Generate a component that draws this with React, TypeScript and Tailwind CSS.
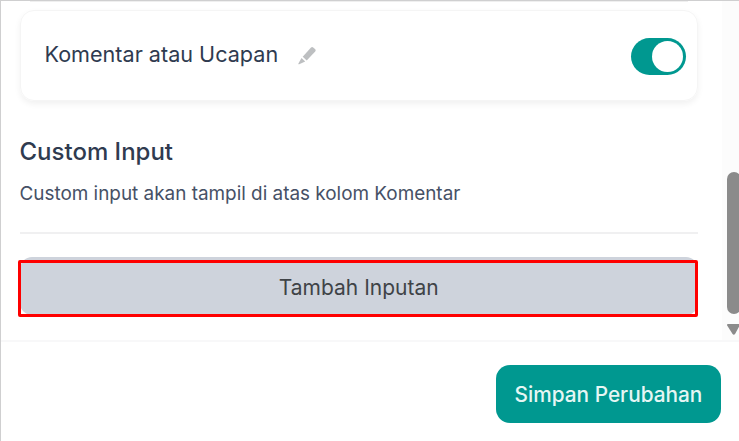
import { useState } from 'react';

const PencilIcon = () => (
  <svg width="18" height="19" viewBox="0 0 18 19" fill="#bdbfc1">
    <path d="M4.7 10.7 13 1.5Q14.1.4 15.2 1.4L17.2 3.3Q18.2 4.3 17.2 5.4L8.7 14.4Z" />
    <path d="M3.5 12 7.2 15.5 1.2 18.2Q.1 18.5.4 17.4Z" />
  </svg>
);

interface ToggleProps {
  checked: boolean;
  onChange: () => void;
}

const Toggle = ({ checked, onChange }: ToggleProps) => (
  <button
    role="switch"
    aria-checked={checked}
    aria-label="Komentar atau Ucapan"
    onClick={onChange}
    className={
      checked
        ? 'mt-0.5 flex h-[37px] w-[55px] items-center justify-end rounded-full bg-[#009890] pr-[3px]'
        : 'mt-0.5 flex h-[37px] w-[55px] items-center justify-start rounded-full bg-gray-300 pl-[3px]'
    }
  >
    <span className="size-[31px] rounded-full bg-white" />
  </button>
);

const Scrollbar = () => (
  <div className="flex w-[17px] flex-col items-end overflow-hidden bg-[#fcfcfc] pt-[171px]">
    <div className="h-[142px] w-3 shrink-0 overflow-hidden">
      <div className="h-full w-[14px] rounded-full bg-[#8b8b8b]" />
    </div>
    <svg className="mt-[9px] shrink-0" width="12" height="13" viewBox="0 0 12 13" fill="#8b8b8b">
      <path d="M1 1H12V3.8L8.2 10.8Q6.8 12.9 5.4 10.8L.2 2.6Q-.4 1 1 1Z" />
    </svg>
  </div>
);

const App = () => {
  const [enabled, setEnabled] = useState(true);

  return (
    <div className="flex h-[441px] w-[739px] flex-col overflow-hidden border-t border-l border-[#cfcfd0] bg-white font-['Inter',sans-serif] text-[#2f3b50]">
      <div className="flex h-[339px] shrink-0">
        <main className="w-[721px] pr-6 pl-[18.5px]">
          {/* Bottom edge of the card scrolled out above */}
          <div className="mx-2.5 mb-2 h-px bg-[#efefef]" />

          {/* Comment field card */}
          <div className="flex h-[91px] items-center justify-between rounded-[14px] border border-[#f5f5f5] pr-[11px] pl-6 shadow-[0_3px_6px_rgba(0,0,0,0.06)]">
            <div className="flex items-center gap-5">
              <span className="-mt-1 text-[21.6px] leading-7">Komentar atau Ucapan</span>
              <PencilIcon />
            </div>
            <Toggle checked={enabled} onChange={() => setEnabled(!enabled)} />
          </div>

          <h2 className="mt-[35px] text-2xl font-[480]">Custom Input</h2>
          <p className="mt-3 text-[18.9px] leading-7 text-[#465166]">
            Custom input akan tampil di atas kolom Komentar
          </p>
          <hr className="mt-6 border-t-2 border-[#f0f0f1]" />

          {/* Add button with the highlight frame over it */}
          <div className="relative mt-[23px]">
            <button className="h-[58px] w-full rounded-[12px] bg-[#ced3dc] pt-[3px] text-[21px] text-[#3f4347]">
              Tambah Inputan
            </button>
            <div className="pointer-events-none absolute -left-[2px] right-0 top-[3px] h-[57px] rounded-[2px] border-[3px] border-[#fe0000]" />
          </div>
        </main>
        <Scrollbar />
      </div>

      <footer className="flex h-[101px] shrink-0 items-start justify-end border-t-2 border-[#f8f8f9] pt-[23px] pr-[18px]">
        <button className="h-[58px] w-[225px] rounded-[14px] bg-[#009890] pt-px text-[20.8px] font-[480] text-[#e5f6f4]">
          Simpan Perubahan
        </button>
      </footer>
    </div>
  );
};

export default App;
